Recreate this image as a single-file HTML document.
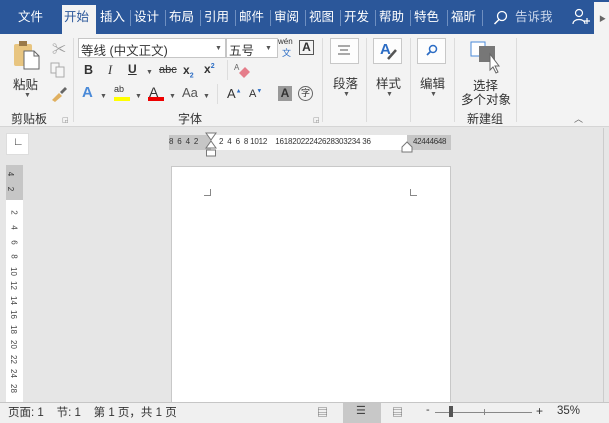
<!DOCTYPE html>
<html><head><meta charset="utf-8"><style>
*{margin:0;padding:0;box-sizing:border-box}
body{width:609px;height:423px;overflow:hidden;background:#e6e6e6;font-family:"Liberation Sans","Noto Sans CJK SC",sans-serif;position:relative;font-size:12px;color:#333}
.a{position:absolute}
.tabs{left:0;top:0;width:609px;height:34px;background:#2b579a}
.tab{position:absolute;top:9px;color:#fff;font-size:12.5px;line-height:16px}
.sep{position:absolute;top:10px;width:1px;height:16px;background:#6f8fc0}
.rib{left:0;top:34px;width:609px;height:93px;background:#f3f3f3;border-bottom:1px solid #d5d5d5}
.gs{position:absolute;top:38px;width:1px;height:84px;background:#dcdcdc}
.t{position:absolute;font-size:12px;color:#333;white-space:nowrap}
.box{position:absolute;background:#fff;border:1px solid #c6c6c6}
.big{position:absolute;width:29px;height:26px;border:1px solid #c8c8c8;background:#fdfdfd}
.dd{position:absolute;font-size:7px;color:#555}
</style></head><body>
<div class="a tabs"></div>
<div class="a" style="left:62px;top:5px;width:34px;height:29px;background:#f3f3f3"></div>
<div class="tab" style="left:18px">文件</div>
<div class="tab" style="left:64px;color:#2b579a">开始</div>
<div class="tab" style="left:100px">插入</div>
<div class="tab" style="left:134px">设计</div>
<div class="tab" style="left:169px">布局</div>
<div class="tab" style="left:204px">引用</div>
<div class="tab" style="left:239px">邮件</div>
<div class="tab" style="left:274px">审阅</div>
<div class="tab" style="left:309px">视图</div>
<div class="tab" style="left:344px">开发</div>
<div class="tab" style="left:379px">帮助</div>
<div class="tab" style="left:414px">特色</div>
<div class="tab" style="left:451px">福昕</div>
<div class="sep" style="left:130px"></div><div class="sep" style="left:165px"></div><div class="sep" style="left:200px"></div><div class="sep" style="left:235px"></div><div class="sep" style="left:270px"></div><div class="sep" style="left:305px"></div><div class="sep" style="left:340px"></div><div class="sep" style="left:375px"></div><div class="sep" style="left:410px"></div><div class="sep" style="left:447px"></div><div class="sep" style="left:482px"></div>
<svg class="a" style="left:493px;top:10px" width="16" height="16"><circle cx="9" cy="6" r="4.5" fill="none" stroke="#fff" stroke-width="1.3"/><line x1="6" y1="9.5" x2="1.5" y2="14" stroke="#fff" stroke-width="1.5"/></svg>
<div class="tab" style="left:515px;color:#c9d5ea">告诉我</div>
<svg class="a" style="left:572px;top:8px" width="18" height="18"><circle cx="7" cy="5" r="3.5" fill="none" stroke="#fff" stroke-width="1.2"/><path d="M1 16 C1 10 13 10 13 16" fill="none" stroke="#fff" stroke-width="1.2"/><path d="M12 13h6M15 10v6" stroke="#fff" stroke-width="1.2"/></svg>
<div class="a" style="left:594px;top:2px;width:15px;height:32px;background:#f3f3f3"></div>
<div class="a" style="left:599px;top:14px;font-size:7px;color:#666">▶</div>

<div class="a rib"></div>
<svg class="a" style="left:13px;top:40px" width="30" height="30"><rect x="1" y="4" width="18" height="22" rx="2" fill="#e8c580"/><rect x="6" y="1" width="8" height="5" fill="#9a7a4a"/><path d="M11 11h10l5 5v13H11z" fill="#fff" stroke="#666"/><path d="M21 11v5h5" fill="none" stroke="#666"/></svg>
<div class="t" style="left:13px;top:74px;font-size:12.5px">粘贴</div>
<div class="dd" style="left:24px;top:92px">▼</div>
<div class="t" style="left:52px;top:39px;color:#999;font-size:14px">✂</div>
<svg class="a" style="left:50px;top:62px" width="16" height="16"><rect x="1" y="1" width="8" height="10" fill="#f6f6f6" stroke="#aaa"/><rect x="6" y="5" width="8" height="10" fill="#f6f6f6" stroke="#aaa"/></svg>
<svg class="a" style="left:50px;top:86px" width="18" height="16"><path d="M2 14 L9 7 L12 10 L5 16z" fill="#e0b060"/><path d="M10 6 L15 1 L17 3 L12 8z" fill="#666"/></svg>
<div class="t" style="left:11px;top:110px">剪贴板</div>
<div class="dd" style="left:62px;top:116px;color:#888">◲</div>
<div class="gs" style="left:73px"></div>
<div class="box" style="left:78px;top:38px;width:148px;height:20px"></div>
<div class="t" style="left:81px;top:40px;font-size:12.5px">等线 (中文正文)</div>
<div class="dd" style="left:215px;top:45px">▼</div>
<div class="box" style="left:226px;top:38px;width:52px;height:20px"></div>
<div class="t" style="left:229px;top:40px;font-size:12.5px">五号</div>
<div class="dd" style="left:265px;top:45px">▼</div>
<div class="t" style="left:278px;top:37px;font-size:8px">wén</div>
<div class="t" style="left:282px;top:46px;font-size:9px;color:#2b6cc4">文</div>
<div class="a" style="left:299px;top:40px;width:15px;height:15px;border:1px solid #555;font-size:12px;font-weight:bold;text-align:center;line-height:13px">A</div>
<div class="t" style="left:84px;top:63px;font-weight:bold;font-size:12.5px">B</div>
<div class="t" style="left:108px;top:63px;font-style:italic;font-size:12.5px;font-family:'Liberation Serif',serif">I</div>
<div class="t" style="left:128px;top:62px;text-decoration:underline;font-weight:bold">U</div>
<div class="dd" style="left:146px;top:69px">▼</div>
<div class="t" style="left:159px;top:64px;font-size:11px;text-decoration:line-through">abc</div>
<div class="t" style="left:183px;top:63px;font-weight:bold">x<sub style="font-size:7px;color:#2b6cc4">2</sub></div>
<div class="t" style="left:204px;top:62px;font-weight:bold">x<sup style="font-size:7px;color:#2b6cc4">2</sup></div>
<div class="a" style="left:227px;top:60px;width:1px;height:20px;background:#ddd"></div>
<svg class="a" style="left:234px;top:62px" width="18" height="16"><path d="M5 11 L11 5 L16 10 L10 16z" fill="#e57d8a"/><text x="0" y="8" font-size="8" fill="#666" font-family="Liberation Sans">A</text></svg>
<div class="t" style="left:82px;top:84px;font-size:15px;color:#4a8ad8;font-weight:bold">A</div>
<div class="dd" style="left:100px;top:93px">▼</div>
<div class="t" style="left:114px;top:84px;font-size:9px">ab</div>
<div class="a" style="left:114px;top:97px;width:16px;height:4px;background:#ffff00"></div>
<div class="dd" style="left:135px;top:93px">▼</div>
<div class="t" style="left:149px;top:84px;font-size:14px">A</div>
<div class="a" style="left:148px;top:97px;width:16px;height:4px;background:#e00"></div>
<div class="dd" style="left:169px;top:93px">▼</div>
<div class="t" style="left:182px;top:85px;font-size:13px;color:#555">Aa</div>
<div class="dd" style="left:203px;top:93px">▼</div>
<div class="a" style="left:217px;top:84px;width:1px;height:20px;background:#ddd"></div>
<div class="t" style="left:227px;top:86px;font-size:13px">A<sup style="font-size:6px;color:#2b6cc4">▲</sup></div>
<div class="t" style="left:249px;top:88px;font-size:11px">A<sup style="font-size:6px;color:#2b6cc4">▼</sup></div>
<div class="a" style="left:278px;top:86px;width:14px;height:15px;background:#999;color:#333;font-weight:bold;font-size:12px;text-align:center;line-height:15px">A</div>
<div class="a" style="left:298px;top:86px;width:15px;height:15px;border:1px solid #666;border-radius:50%;font-size:9px;text-align:center;line-height:13px">字</div>
<div class="t" style="left:178px;top:110px">字体</div>
<div class="dd" style="left:313px;top:116px;color:#888">◲</div>
<div class="gs" style="left:322px"></div>
<div class="big" style="left:330px;top:38px"></div>
<svg class="a" style="left:336px;top:44px" width="16" height="14"><path d="M2 2h12M4 6h8M2 10h12" stroke="#555"/></svg>
<div class="t" style="left:333px;top:73px;font-size:12.5px">段落</div>
<div class="dd" style="left:343px;top:91px">▼</div>
<div class="gs" style="left:366px"></div>
<div class="big" style="left:373px;top:38px"></div>
<div class="t" style="left:380px;top:41px;font-size:15px;color:#2b6cc4;font-weight:bold">A</div>
<svg class="a" style="left:386px;top:48px" width="12" height="12"><path d="M2 11 L10 2" stroke="#555" stroke-width="2.5"/></svg>
<div class="t" style="left:376px;top:73px;font-size:12.5px">样式</div>
<div class="dd" style="left:386px;top:91px">▼</div>
<div class="gs" style="left:410px"></div>
<div class="big" style="left:417px;top:38px"></div>
<svg class="a" style="left:424px;top:43px" width="16" height="16"><circle cx="9" cy="6" r="3.5" fill="none" stroke="#2b6cc4" stroke-width="1.5"/><line x1="6.5" y1="8.5" x2="3" y2="12" stroke="#2b6cc4" stroke-width="1.8"/></svg>
<div class="t" style="left:420px;top:73px;font-size:12.5px">编辑</div>
<div class="dd" style="left:430px;top:91px">▼</div>
<div class="gs" style="left:454px"></div>
<svg class="a" style="left:470px;top:40px" width="34" height="34"><rect x="1" y="2" width="14" height="14" fill="#fff" stroke="#4a8ad8"/><rect x="9" y="6" width="16" height="16" fill="#777"/><path d="M20 14 L20 30 L23 27 L26 33 L28 32 L25 26 L29 26z" fill="#fff" stroke="#666"/></svg>
<div class="t" style="left:473px;top:75px;font-size:12.5px">选择</div>
<div class="t" style="left:461px;top:89px;font-size:12.5px">多个对象</div>
<div class="t" style="left:467px;top:110px">新建组</div>
<div class="gs" style="left:516px"></div>
<div class="t" style="left:574px;top:112px;font-size:9px;color:#666">︿</div>
<div class="a" style="left:0;top:128px;width:609px;height:274px;background:#e6e6e6"></div>
<div class="a" style="left:6px;top:133px;width:23px;height:22px;background:#fff;border:1px solid #ddd"></div>
<div class="t" style="left:13px;top:136px;font-size:11px">∟</div>
<div class="a" style="left:169px;top:135px;width:42px;height:15px;background:#c6c6c6"></div>
<div class="a" style="left:211px;top:135px;width:196px;height:15px;background:#fff"></div>
<div class="a" style="left:407px;top:135px;width:44px;height:15px;background:#c6c6c6"></div>
<div class="t" style="left:169px;top:137px;font-size:8px;letter-spacing:-0.2px">8&nbsp; 6&nbsp; 4&nbsp; 2</div>
<div class="t" style="left:219px;top:137px;font-size:8px;letter-spacing:-0.2px">2&nbsp; 4&nbsp; 6&nbsp; 8 1012&nbsp;&nbsp;&nbsp; 16182022242628303234 36</div>
<div class="t" style="left:413px;top:137px;font-size:8px;letter-spacing:-0.3px">42444648</div>
<svg class="a" style="left:205px;top:132px" width="12" height="28"><path d="M1 1h10L6 8z M1 16h10L6 9z" fill="#fff" stroke="#777"/><rect x="1.5" y="18" width="9" height="6" fill="#fff" stroke="#777"/></svg>
<svg class="a" style="left:401px;top:141px" width="12" height="12"><path d="M1 11V6l5-5 5 5v5z" fill="#fff" stroke="#777"/></svg>
<div class="a" style="left:6px;top:165px;width:17px;height:35px;background:#c6c6c6"></div>
<div class="a" style="left:6px;top:200px;width:17px;height:202px;background:#fff"></div>
<div class="a" style="left:8px;top:165px;width:12px;height:237px;font-size:8px;line-height:1">
<div class="a" style="top:5px;transform:rotate(90deg);left:0">4</div>
<div class="a" style="top:20px;transform:rotate(90deg);left:0">2</div>
</div>
<div class="a" style="left:8px;top:200px;width:14px;height:200px;font-size:8px;color:#444">
<div class="a" style="top:8px;left:4px;transform:rotate(90deg)">2</div>
<div class="a" style="top:23px;left:4px;transform:rotate(90deg)">4</div>
<div class="a" style="top:38px;left:4px;transform:rotate(90deg)">6</div>
<div class="a" style="top:52px;left:4px;transform:rotate(90deg)">8</div>
<div class="a" style="top:67px;left:1px;transform:rotate(90deg)">10</div>
<div class="a" style="top:81px;left:1px;transform:rotate(90deg)">12</div>
<div class="a" style="top:96px;left:1px;transform:rotate(90deg)">14</div>
<div class="a" style="top:110px;left:1px;transform:rotate(90deg)">16</div>
<div class="a" style="top:125px;left:1px;transform:rotate(90deg)">18</div>
<div class="a" style="top:140px;left:1px;transform:rotate(90deg)">20</div>
<div class="a" style="top:155px;left:1px;transform:rotate(90deg)">22</div>
<div class="a" style="top:169px;left:1px;transform:rotate(90deg)">24</div>
<div class="a" style="top:184px;left:1px;transform:rotate(90deg)">28</div>
</div>
<div class="a" style="left:171px;top:166px;width:280px;height:236px;background:#fff;border:1px solid #c8c8c8;border-bottom:none"></div>
<div class="a" style="left:204px;top:189px;width:7px;height:7px;border-right:1px solid #888;border-bottom:1px solid #888"></div>
<div class="a" style="left:410px;top:189px;width:7px;height:7px;border-left:1px solid #888;border-bottom:1px solid #888"></div>
<div class="a" style="left:603px;top:128px;width:6px;height:274px;background:#e6e6e6;border-left:1px solid #ccc"></div>
<div class="a" style="left:0;top:402px;width:609px;height:21px;background:#f0f0f0;border-top:1px solid #c6c6c6"></div>
<div class="t" style="left:8px;top:404px;font-size:11.5px">页面: 1&nbsp;&nbsp;&nbsp; 节: 1&nbsp;&nbsp;&nbsp; 第 1 页，共 1 页</div>
<div class="t" style="left:317px;top:404px;font-size:11px;color:#555">▤</div>
<div class="a" style="left:343px;top:403px;width:38px;height:20px;background:#c8c8c8"></div>
<div class="t" style="left:356px;top:404px;font-size:11px;color:#444">☰</div>
<div class="t" style="left:392px;top:404px;font-size:11px;color:#555">▤</div>
<div class="t" style="left:426px;top:404px;font-size:11px">-</div>
<div class="a" style="left:435px;top:412px;width:97px;height:1px;background:#888"></div>
<div class="a" style="left:449px;top:406px;width:4px;height:11px;background:#555"></div>
<div class="a" style="left:484px;top:409px;width:1px;height:6px;background:#888"></div>
<div class="t" style="left:536px;top:404px;font-size:12px">+</div>
<div class="t" style="left:557px;top:405px;font-size:11.5px">35%</div>
</body></html>
